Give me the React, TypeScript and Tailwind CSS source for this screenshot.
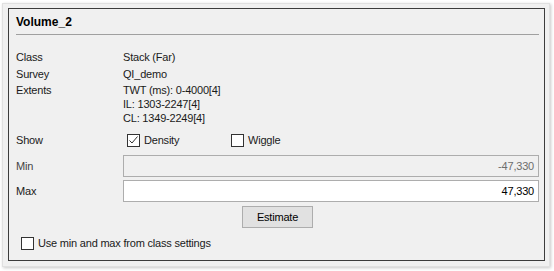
const extents = ["TWT (ms): 0-4000[4]", "IL: 1303-2247[4]", "CL: 1349-2249[4]"];

const CheckBox = ({ checked }: { checked?: boolean }) => (
  <span className="w-[13px] h-[13px] border border-[#333333] bg-white flex items-center justify-center shrink-0">
    {checked && (
      <svg width="11" height="11" viewBox="0 0 11 11">
        <path d="M1.5 5.5 L4 8 L9.5 1.5" fill="none" stroke="#333333" strokeWidth="1" />
      </svg>
    )}
  </span>
);

const Row = ({ label, children }: { label: string; children: React.ReactNode }) => (
  <div className="flex">
    <div className="w-[107px] shrink-0 h-[17px] flex items-center">{label}</div>
    <div className="flex-1">{children}</div>
  </div>
);

const App = () => {
  return (
    <div
      className="w-[554px] h-[271px] bg-white pt-[3px] pl-[2px] text-[11px] tracking-[-0.2px] text-[#1a1a1a]"
      style={{ fontFamily: '"Liberation Sans", Arial, sans-serif' }}
    >
      <div className="w-[548px] h-[264px] bg-[#f0f0f0] border border-[#e0e0e0] shadow-[1px_1px_3px_rgba(0,0,0,0.22)] pt-[4px] pl-[5px]">
        <div className="w-[537px] h-[253px] border border-[#3c3c3c] pl-[7px] pr-[5px]">
          <div className="h-[25px] flex items-center text-[12px] font-bold tracking-normal text-black">Volume_2</div>
          <div className="h-px bg-[#a0a0a0]" />

          <div className="mt-[14px]">
            <Row label="Class">
              <div className="h-[17px] flex items-center">Stack (Far)</div>
            </Row>
            <Row label="Survey">
              <div className="h-[17px] flex items-center">QI_demo</div>
            </Row>
            <div className="flex">
              <div className="w-[107px] shrink-0 h-[14px] flex items-center">Extents</div>
              <div className="flex flex-col">
                {extents.map((e, i) => (
                  <div key={i} className="h-[14px] flex items-center">
                    {e}
                  </div>
                ))}
              </div>
            </div>
          </div>

          <div className="mt-[7px]">
            <Row label="Show">
              <div className="h-[17px] flex items-center pl-[4px]">
                <div className="w-[104px] flex items-center gap-[4px]">
                  <CheckBox checked />
                  <span>Density</span>
                </div>
                <div className="flex items-center gap-[4px]">
                  <CheckBox />
                  <span>Wiggle</span>
                </div>
              </div>
            </Row>
          </div>

          <div className="mt-[6px] flex flex-col gap-[3px]">
            <div className="flex items-center">
              <div className="w-[107px] shrink-0 text-[#444444]">Min</div>
              <div className="flex-1 h-[22px] border border-[#adadad] bg-[#f0f0f0] flex items-center justify-end pr-[4px] text-[#6d6d6d]">
                -47,330
              </div>
            </div>
            <div className="flex items-center">
              <div className="w-[107px] shrink-0">Max</div>
              <div className="flex-1 h-[22px] border border-[#adadad] bg-white flex items-center justify-end pr-[4px] text-black">
                47,330
              </div>
            </div>
          </div>

          <div className="mt-[4px] flex pl-[226px]">
            <button className="w-[71px] h-[22px] border border-[#adadad] bg-[#e1e1e1] text-black text-[11px] tracking-[-0.2px]">
              Estimate
            </button>
          </div>

          <div className="mt-[7px] h-[17px] flex items-center gap-[4px] pl-[5px]">
            <CheckBox />
            <span>Use min and max from class settings</span>
          </div>
        </div>
      </div>
    </div>
  );
};

export default App;
